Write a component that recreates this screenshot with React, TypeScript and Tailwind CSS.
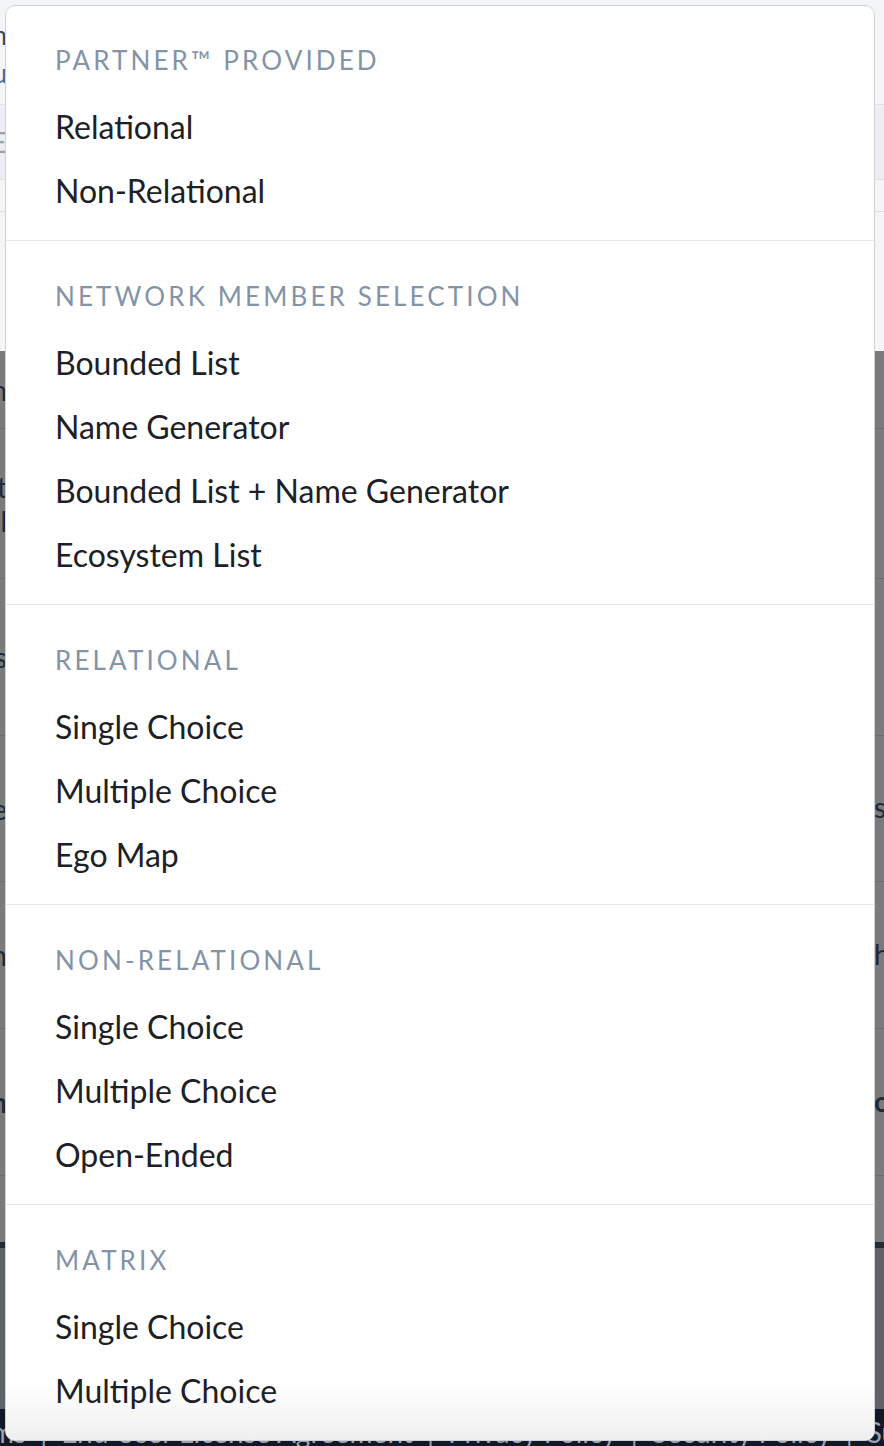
import React from 'react';

type Section = { title: string; items: string[] };

const sections: Section[] = [
    { title: 'Partner™ Provided', items: ['Relational', 'Non-Relational'] },
    {
        title: 'Network Member Selection',
        items: ['Bounded List', 'Name Generator', 'Bounded List + Name Generator', 'Ecosystem List'],
    },
    { title: 'Relational', items: ['Single Choice', 'Multiple Choice', 'Ego Map'] },
    { title: 'Non-Relational', items: ['Single Choice', 'Multiple Choice', 'Open-Ended'] },
    { title: 'Matrix', items: ['Single Choice', 'Multiple Choice'] },
];

// a background row: only thin slivers of it show at the page edges
function BgRow({
    left,
    right,
    className,
    leftClass = 'text-[#1f2937]',
    rightClass = 'text-[#1f2937]',
}: {
    left?: string;
    right?: string;
    className: string;
    leftClass?: string;
    rightClass?: string;
}) {
    return (
        <div className={`flex items-center justify-between ${className}`}>
            <div className="flex w-[7px] justify-end overflow-hidden">
                <span className={`whitespace-nowrap text-[28px] leading-[28px] ${leftClass}`}>{left}</span>
            </div>
            <div className="w-[10px] overflow-hidden">
                <span className={`whitespace-nowrap text-[28px] leading-[28px] ${rightClass}`}>{right}</span>
            </div>
        </div>
    );
}

export default function App() {
    return (
        <div className="relative h-[1446px] w-[884px] overflow-hidden font-['Lato','Noto_Sans',sans-serif]">
            {/* Page behind the menu */}
            <div className="flex h-full flex-col">
                {/* Light header area */}
                <div className="flex h-[352px] flex-col bg-[#f4f5f7]">
                    <div className="flex h-[104px] flex-col justify-center gap-[10px] pt-[4px]">
                        <div className="flex w-[7px] justify-end overflow-hidden">
                            <span className="whitespace-nowrap text-[26px] leading-[28px] text-[#3b4556]">Nam</span>
                        </div>
                        <div className="flex w-[7px] justify-end overflow-hidden">
                            <span className="whitespace-nowrap text-[26px] leading-[28px] text-[#4a6aa0]">Du</span>
                        </div>
                    </div>
                    <div className="flex h-[76px] items-center border-y border-[#dfe1e5] bg-[#eceef1]">
                        <div className="flex w-[7px] justify-end overflow-hidden">
                            <span className="whitespace-nowrap text-[28px] leading-[28px] text-[#9aa0a8]">BE</span>
                        </div>
                    </div>
                    <div className="h-[32px] border-b border-[#dfe1e5]" />
                    <div className="flex-1" />
                </div>

                {/* Dimmed table area */}
                <div className="flex flex-col bg-[#7a7b7d]">
                    <BgRow className="h-[78px] border-b border-[#6c6d6f]" left="Item" />
                    <div className="flex h-[150px] flex-col justify-center gap-[6px] border-b border-[#6c6d6f]">
                        <div className="flex w-[7px] justify-end overflow-hidden">
                            <span className="whitespace-nowrap text-[28px] leading-[28px] text-[#1f2937]">Relat</span>
                        </div>
                        <div className="flex w-[7px] justify-end overflow-hidden">
                            <span className="whitespace-nowrap text-[28px] leading-[28px] text-[#1f2937]">Nonal</span>
                        </div>
                    </div>
                    <BgRow className="h-[157px] border-b border-[#6c6d6f]" left="Lists" />
                    <BgRow className="h-[146px] border-b border-[#6c6d6f]" left="Ee" right="s" />
                    <BgRow className="h-[147px] border-b border-[#6c6d6f]" left="Mn" right="h" />
                    <BgRow
                        className="h-[147px] border-b border-[#6c6d6f]"
                        left="On"
                        right="o"
                        leftClass="font-bold text-[#1f2937]"
                        rightClass="font-bold text-[#1f2937]"
                    />
                    <div className="h-[66px]" />
                </div>

                <div className="h-[6px] bg-[#232a33]" />
                <div className="h-[161px] bg-[#5f6368]" />

                {/* Footer */}
                <div className="flex-1 bg-[#111827] pt-[9px]">
                    <div className="-ml-[47px] flex gap-[14px] whitespace-nowrap text-[28px] leading-[28px] text-[#9ca3af]">
                        <span>Terms</span>
                        <span>|</span>
                        <span>End User License Agreement</span>
                        <span>|</span>
                        <span>Privacy Policy</span>
                        <span>|</span>
                        <span>Security Policy</span>
                        <span>|</span>
                        <span>Support</span>
                    </div>
                </div>
            </div>

            {/* Dropdown menu */}
            <div className="absolute left-[5px] top-[5px] h-[1436px] w-[870px] overflow-hidden rounded-[10px] border border-[#d0d1d5] bg-white">
                <div className="pointer-events-none absolute bottom-0 left-0 h-[56px] w-full bg-linear-to-b from-white/0 to-[#efefef]" />
                <div className="relative">
                    {sections.map((section, i) => (
                        <div
                            key={section.title}
                            className={`pb-[17px] ${i > 0 ? 'border-t border-[#e6e7eb] pt-[41px]' : 'pt-[40px]'}`}
                        >
                            <div className="mb-[21px] px-[49px] text-[26px] uppercase leading-[28px] tracking-[0.12em] text-[#8593a7]">
                                {section.title}
                            </div>
                            {section.items.map((item) => (
                                <div
                                    key={item}
                                    className="flex h-16 items-center px-[49px] text-[32px] leading-[32px] text-[#1d2125]"
                                >
                                    {item}
                                </div>
                            ))}
                        </div>
                    ))}
                </div>
            </div>
        </div>
    );
}
